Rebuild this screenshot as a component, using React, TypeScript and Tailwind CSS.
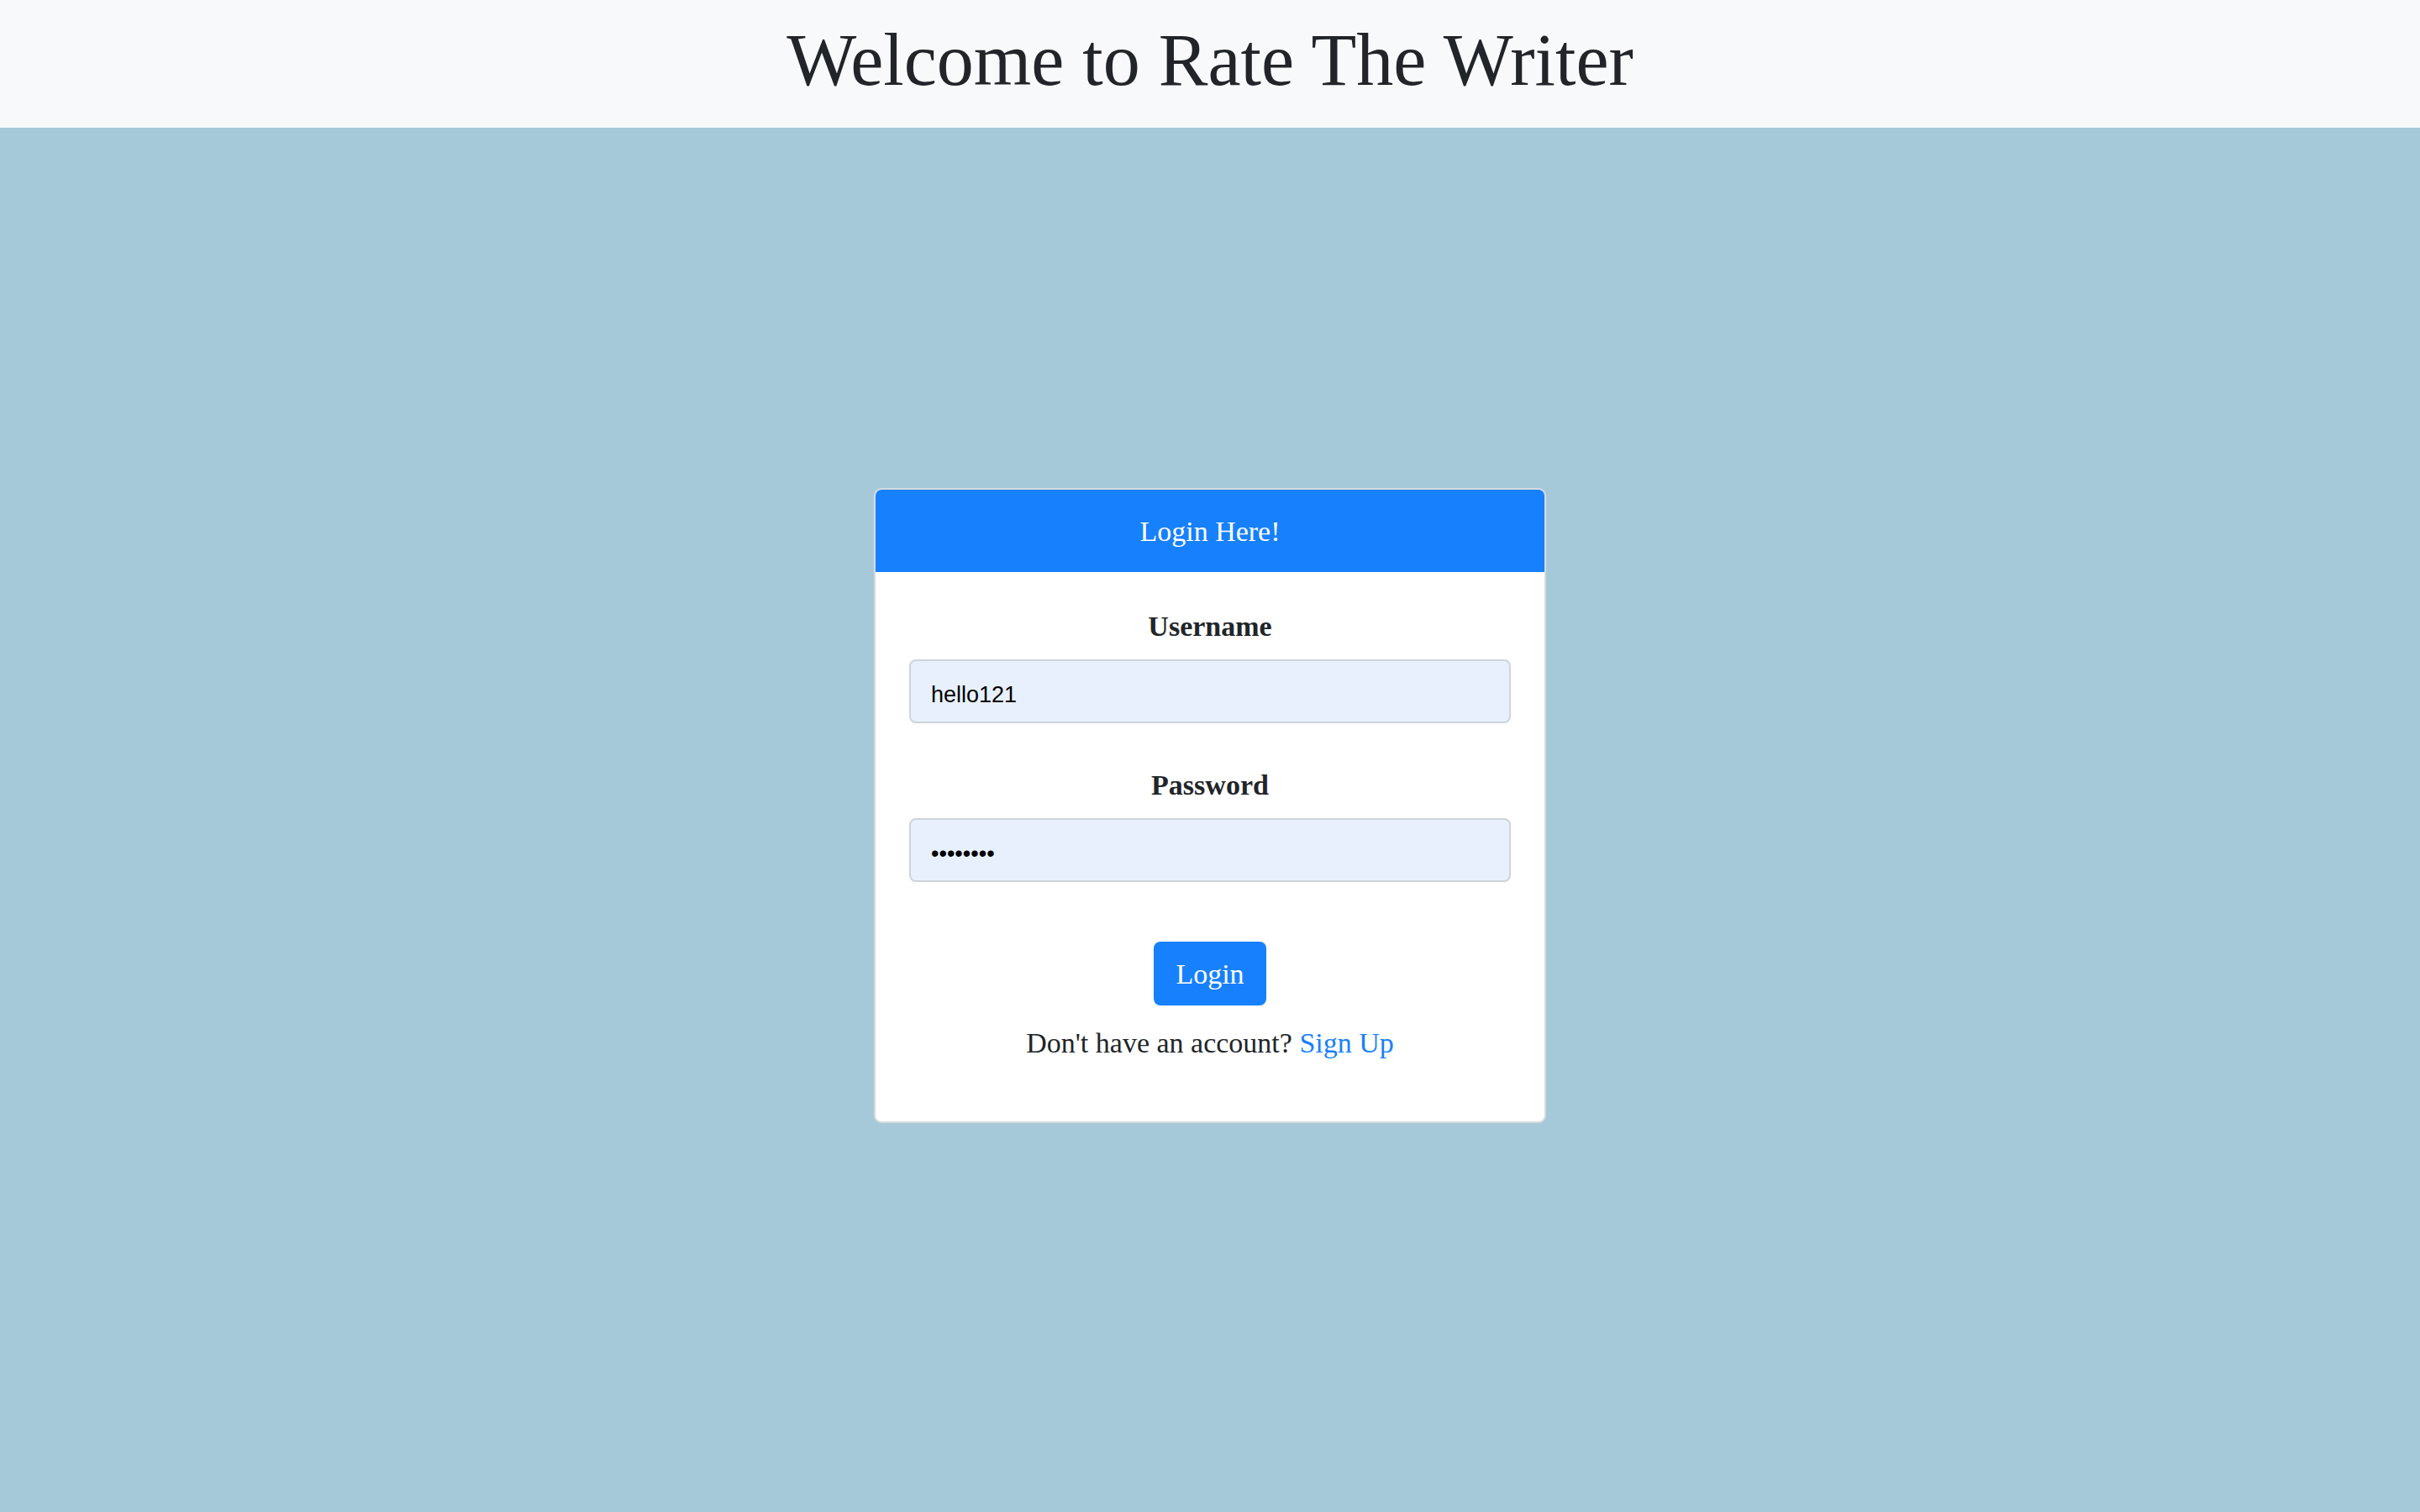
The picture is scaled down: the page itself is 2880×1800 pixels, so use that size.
import { useState } from "react";

const serif = "font-['Liberation_Serif',serif]";

const App = () => {
    const [username, setUsername] = useState<string>("hello121")
    const [password, setPassword] = useState<string>("password")
    return (
        <div className={`min-h-screen w-full flex flex-col bg-[#a5c9d8] ${serif}`}>
            <header className="h-[152px] w-full flex items-center justify-center bg-[#f8f9fa]">
                <h1 className="text-[88px] leading-none text-[#212529] pb-2">Welcome to Rate The Writer</h1>
            </header>
            <main className="flex justify-center pt-[429px]">
                <div className="w-[800px] rounded-[9px] border-2 border-[#d7dadd] bg-white overflow-hidden">
                    <div className="h-[98px] flex items-center justify-center bg-[#1780fc] text-white text-[34px]">
                        Login Here!
                    </div>
                    <form className="flex flex-col px-10 pt-10 pb-[42px]" onSubmit={e => e.preventDefault()}>
                        <label className="h-12 flex items-center justify-center text-[34px] font-bold text-[#212529]">Username</label>
                        <input type="text" value={username}
                            onChange={event => setUsername(event.target.value)}
                            className="mt-4 h-[76px] rounded-[8px] border-2 border-[#ced4da] bg-[#e8f0fe] px-6 pt-2 text-[27px] text-black font-['Liberation_Sans',sans-serif] outline-none" />
                        <label className="mt-[49px] h-12 flex items-center justify-center text-[34px] font-bold text-[#212529]">Password</label>
                        <input type="password" value={password}
                            onChange={event => setPassword(event.target.value)}
                            className="mt-4 h-[76px] rounded-[8px] border-2 border-[#ced4da] bg-[#e8f0fe] px-6 pt-2 text-[27px] text-black font-['Liberation_Sans',sans-serif] outline-none" />
                        <div className="mt-[71px] flex justify-center">
                            <button type="submit" className="h-[76px] w-[134px] rounded-[8px] bg-[#1780fc] text-white text-[34px]">Login</button>
                        </div>
                        <p className="mt-[20px] h-12 mb-[28px] flex items-center justify-center text-[34px] text-[#212529]">
                            Don't have an account?&nbsp;<a href="#" className="text-[#1780fc]">Sign Up</a>
                        </p>
                    </form>
                </div>
            </main>
        </div>
    );
}

export default App;
